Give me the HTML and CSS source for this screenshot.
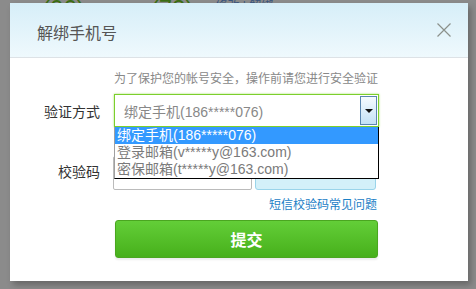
FILE: index.html
```html
<!DOCTYPE html>
<html lang="zh-CN">

<head>
    <meta charset="UTF-8">
    <meta name="viewport" content="width=device-width, initial-scale=1.0">
    <title>解绑手机号</title>
    <link rel="stylesheet" href="styles.css">
</head>

<body>
    <div class="page">
        <span class="count">(06)</span>
        <span class="count">(72)</span>
        <span class="links"><a>修改</a> | <a>解绑</a></span>
    </div>

    <div class="dialog">
        <div class="dialog-head">
            <h1>解绑手机号</h1>
            <span class="close">
                <svg width="14" height="14" viewBox="0 0 14 14">
                    <path d="M0.5 0.5 L13.5 13.5 M13.5 0.5 L0.5 13.5" stroke="#8b918b" stroke-width="1.2" fill="none"/>
                </svg>
            </span>
        </div>
        <div class="dialog-body">
            <p class="notice">为了保护您的帐号安全，操作前请您进行安全验证</p>
            <div class="row">
                <label>验证方式</label>
                <div class="select">
                    <span class="select-value">绑定手机(186*****076)</span>
                    <span class="select-btn"><i></i></span>
                    <ul class="options">
                        <li class="active">绑定手机(186*****076)</li>
                        <li>登录邮箱(v*****y@163.com)</li>
                        <li>密保邮箱(t*****y@163.com)</li>
                    </ul>
                </div>
            </div>
            <div class="row row-code">
                <label>校验码</label>
                <div class="code">
                    <input type="text">
                    <button class="btn-send"></button>
                </div>
            </div>
            <div class="help"><a>短信校验码常见问题</a></div>
            <button class="btn-submit">提交</button>
        </div>
    </div>
</body>

</html>
```

FILE: styles.css
```css
body {
    font-family: 'Liberation Sans', 'Noto Sans CJK SC', sans-serif;
    margin: 0;
    background-color: #8b8b8b;
    height: 289px;
    overflow: hidden;
    position: relative;
}

.page {
    display: flex;
    align-items: flex-end;
    height: 3px;
    overflow: hidden;
    padding-left: 42px;
}

.count {
    color: #3c6e14;
    font-size: 24px;
    line-height: 24px;
    margin-right: 66px;
    flex-shrink: 0;
    transform: translateY(18px);
}

.count + .count {
    margin-right: 22px;
}

.links {
    color: #3b567e;
    font-size: 12px;
    line-height: 12px;
    flex-shrink: 0;
    transform: translateY(9px);
}

.dialog {
    position: absolute;
    left: 10px;
    top: 3px;
    width: 458px;
    height: 278px;
    background: #ffffff;
    box-shadow: 3px 4px 6px rgba(0, 0, 0, 0.25);
}

.dialog-head {
    height: 55px;
    display: flex;
    align-items: center;
    justify-content: space-between;
    padding: 4px 17px 0 27px;
    box-sizing: border-box;
    background: linear-gradient(#d6eef8, #eff9fd);
    border-bottom: 1px solid #dde2e6;
}

.dialog-head h1 {
    margin: 0;
    font-size: 16px;
    font-weight: normal;
    color: #555555;
}

.close {
    display: flex;
    margin-top: -4px;
}

.dialog-body {
    padding-top: 13px;
}

.notice {
    margin: 0 0 7px 104px;
    font-size: 12px;
    line-height: 16px;
    color: #888888;
}

.row {
    display: flex;
    align-items: center;
}

.row label {
    width: 90px;
    margin-right: 14px;
    text-align: right;
    font-size: 14px;
    color: #333333;
}

.select {
    position: relative;
    width: 265px;
    height: 33px;
    box-sizing: border-box;
    border: 1px solid #7ccf2c;
    box-shadow: 0 0 2px #a6e06a;
    display: flex;
    align-items: center;
    padding: 0 1px 0 9px;
}

.select-value {
    flex: 1;
    font-size: 14px;
    color: #888888;
}

.select-btn {
    width: 17px;
    height: 29px;
    box-sizing: border-box;
    border: 1px solid #5a86b0;
    background: linear-gradient(#f6fbff, #c3e1f6);
    display: flex;
    align-items: center;
    justify-content: center;
}

.select-btn i {
    width: 0;
    height: 0;
    border-left: 4px solid transparent;
    border-right: 4px solid transparent;
    border-top: 4px solid #111111;
}

.options {
    position: absolute;
    top: 32px;
    left: -1px;
    width: 265px;
    margin: 0;
    padding: 0;
    list-style: none;
    background: #ffffff;
    box-sizing: border-box;
    border: 1px solid #000000;
    border-left-color: #a0a0a0;
    border-top: none;
    z-index: 2;
}

.options li {
    height: 17px;
    line-height: 17px;
    padding-left: 2px;
    font-size: 14px;
    color: #7a7a7a;
    white-space: nowrap;
}

.options li.active {
    background: #3399ff;
    color: #ffffff;
}

.row-code {
    margin-top: 29px;
}

.row-code label {
    margin-top: -5px;
}

.code {
    display: flex;
    gap: 3px;
    margin-left: -1px;
}

.code input {
    width: 139px;
    height: 34px;
    box-sizing: border-box;
    border: 1px solid #bbbbbb;
    border-radius: 2px;
    margin: 0;
}

.btn-send {
    width: 121px;
    height: 34px;
    border: 1px solid #9ad4ea;
    border-radius: 3px;
    background: #d3f0f9;
}

.help {
    width: 367px;
    margin-top: 8px;
    text-align: right;
    font-size: 12px;
    line-height: 14px;
}

.help a {
    color: #1b80c6;
}

.btn-submit {
    display: block;
    width: 263px;
    height: 38px;
    margin: 8px 0 0 105px;
    border: 1px solid #4aa620;
    border-radius: 3px;
    background: linear-gradient(#63ce38, #47b01b);
    box-shadow: 0 2px 2px rgba(0, 0, 0, 0.08);
    color: #ffffff;
    font-family: inherit;
    font-size: 16px;
    font-weight: bold;
}
```
